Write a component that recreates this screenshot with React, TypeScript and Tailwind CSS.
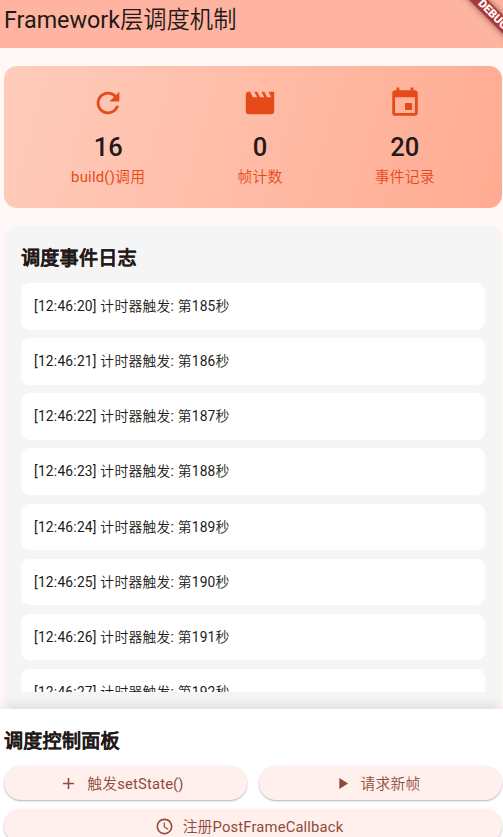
import type { ReactNode } from 'react';
import type { IconType } from 'react-icons';
import { MdAdd, MdEvent, MdMovie, MdPlayArrow, MdRefresh, MdSchedule } from 'react-icons/md';

type Stat = {
  icon: IconType;
  value: number;
  label: string;
};

const stats: Stat[] = [
  { icon: MdRefresh, value: 16, label: 'build()调用' },
  { icon: MdMovie, value: 0, label: '帧计数' },
  { icon: MdEvent, value: 20, label: '事件记录' },
];

const logs = [
  '[12:46:20] 计时器触发: 第185秒',
  '[12:46:21] 计时器触发: 第186秒',
  '[12:46:22] 计时器触发: 第187秒',
  '[12:46:23] 计时器触发: 第188秒',
  '[12:46:24] 计时器触发: 第189秒',
  '[12:46:25] 计时器触发: 第190秒',
  '[12:46:26] 计时器触发: 第191秒',
  '[12:46:27] 计时器触发: 第192秒',
];

function StatItem({ icon: Icon, value, label }: Stat) {
  return (
    <div className="flex flex-col items-center text-[#e64a19]">
      <Icon className="size-[34px]" />
      <div className="mt-[10px] h-[34px] text-[25.5px] leading-[34px] font-medium text-[#231917]">{value}</div>
      <div className="mt-[2px] text-[14.8px] leading-[22px] tracking-[0.26px]">{label}</div>
    </div>
  );
}

function PillButton({ icon: Icon, children, className = '' }: { icon: IconType; children: ReactNode; className?: string }) {
  return (
    <button
      className={`flex h-[34px] items-center justify-center gap-[9px] rounded-full bg-[#fff0ed] pr-[8px] text-[14.8px] tracking-[0.15px] text-[#8f4c38] shadow-[0_1px_2px_rgba(0,0,0,0.3)] ${className}`}
    >
      <Icon className="size-[19px]" />
      <span className="pt-[2px]">{children}</span>
    </button>
  );
}

export default function App() {
  return (
    <div className="relative flex h-[837px] w-[503px] flex-col overflow-hidden bg-[#fff8f6] font-['Roboto','Noto_Sans_CJK_SC_DemiLight','Noto_Sans_CJK_SC',sans-serif] text-[#231917]">
      <header className="h-[48px] shrink-0 bg-[#ffb4a1] pl-1">
        <h1 className="text-[23.3px] leading-[40px]">Framework层调度机制</h1>
      </header>

      <section className="mt-[18px] mr-px ml-1 flex h-[142px] shrink-0 justify-around rounded-[13px] bg-linear-[105.9deg] from-[#ffccbc] to-[#ffab91] px-[21px] pt-[20px]">
        {stats.map((s) => (
          <StatItem key={s.label} {...s} />
        ))}
      </section>

      <section className="mt-[18px] mr-px ml-1 flex h-[483px] shrink-0 flex-col rounded-[13px] bg-[#f5f5f5] px-[17px] pt-[17px] pb-[17px]">
        <h2 className="h-[40px] shrink-0 text-[19.1px] leading-[32px] font-bold tracking-[0.2px] [-webkit-text-stroke:0.1px]">
          调度事件日志
        </h2>
        <ul className="min-h-0 flex-1 overflow-hidden">
          {logs.map((log) => (
            <li
              key={log}
              className="mb-[8.65px] h-[46.5px] rounded-[8.5px] bg-white pl-[13px] text-[13.8px] leading-[46px] tracking-[0.22px]"
            >
              {log}
            </li>
          ))}
        </ul>
      </section>

      <footer className="relative flex-1 bg-white pr-px pl-1 shadow-[0_-2px_13px_rgba(0,0,0,0.12)]">
        <h2 className="h-[57px] pt-[17px] text-[19.1px] leading-[32px] font-bold tracking-[0.2px] [-webkit-text-stroke:0.1px]">
          调度控制面板
        </h2>
        <div className="flex flex-wrap gap-x-[12px] gap-y-[9px]">
          <PillButton icon={MdAdd} className="w-[243px]">触发setState()</PillButton>
          <PillButton icon={MdPlayArrow} className="flex-1">请求新帧</PillButton>
          <PillButton icon={MdSchedule} className="w-full">注册PostFrameCallback</PillButton>
        </div>
      </footer>

      {/* debug ribbon across the top right corner */}
      <div className="absolute top-[7.5px] -right-[50px] flex h-[13px] w-[120px] rotate-45 items-center justify-center bg-[#b03636] text-[11.5px] leading-none font-black text-white shadow-[0_0_6px_rgba(0,0,0,0.5)]">
        DEBUG
      </div>
    </div>
  );
}
